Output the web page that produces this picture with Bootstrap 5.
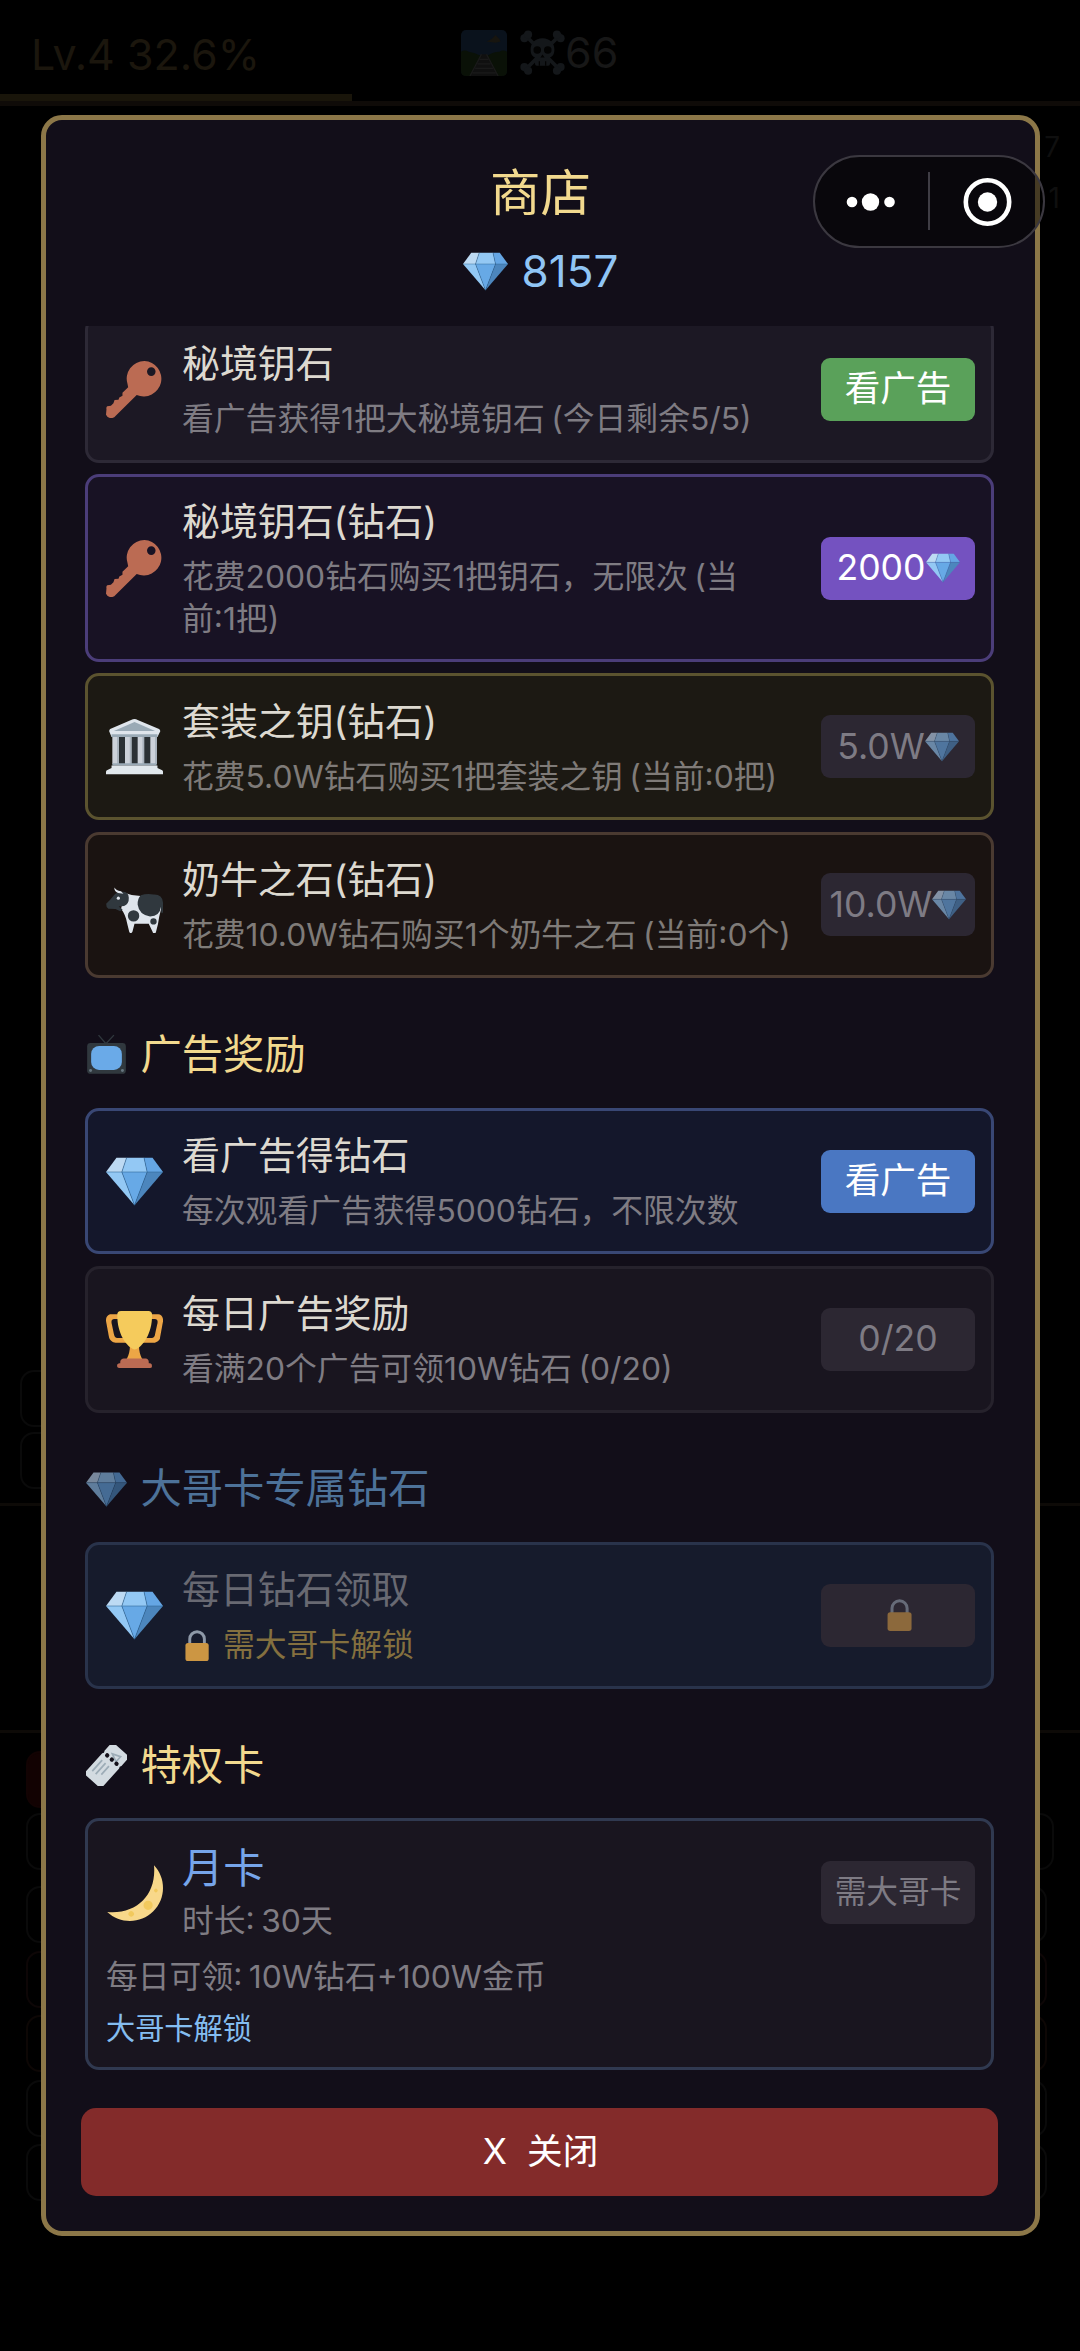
<!DOCTYPE html>
<html lang="zh-CN">
<head>
<meta charset="utf-8">
<meta name="viewport" content="width=device-width, initial-scale=1">
<title>商店</title>
<link href="https://cdn.jsdelivr.net/npm/bootstrap@5.3.0/dist/css/bootstrap.min.css" rel="stylesheet">
<style>
  html, body { height: 2351px; overflow: hidden; }
  body { background: #000; font-family: Inter, "Noto Sans CJK SC", sans-serif; color: #ddd9d0; }
  .stage { width: 1080px; height: 2351px; overflow: hidden; }
  svg { display: block; flex: none; }

  /* dimmed game screen behind the dialog */
  .hud { height: 106px; border-bottom: 5px solid #0f0b08; font-size: 43px; padding: 0 0 0 31px; }
  .hud-level { color: #1b160d; width: 430px; line-height: 109px; }
  .hud-kills { color: #171717; line-height: 109px; padding-top: 4px; }
  .hud-exp { left: 0; top: 94px; width: 352px; height: 7px; background: #19150a; }
  .side-num { right: 20px; font-size: 28px; line-height: 30px; color: #0f0f0f; }
  .ghost { border: 2px solid #0a0a0a; border-radius: 14px; width: 100px; height: 57px; }
  .hline { left: 0; right: 0; height: 3px; background: #0d0a07; }

  /* dialog */
  .shop { width: 999px; height: 2121px; margin: 9px 0 0 41px; border: 5px solid #8c7748; border-radius: 21px; background: #120e19; padding: 0 35px 0 35px; }
  .shop-title { font-size: 50.5px; line-height: 60px; color: #f2d98e; margin-top: 43px; }
  .shop-gems { font-size: 44px; line-height: 60px; color: #90c5f5; gap: 14px; margin-top: 18px; }
  .shop-list { margin-top: 25px; height: 1757px; padding: 0 4px; overflow: hidden; }
  .offer { width: 909px; height: 146.7px; border: 3px solid #2d2936; border-radius: 14px; background: #1c1824; padding: 0 16px 0 18px; margin-bottom: 11.4px; }
  .offer-cut { margin-top: -10px; }
  .offer-purple { height: 188px; background: #181224; border-color: #4b3d79; }
  .offer-gold { background: #1c1913; border-color: #5b532f; }
  .offer-brown { background: #1a1311; border-color: #4a3a31; margin-bottom: 0; }
  .offer-blue { background: #14172b; border-color: #394774; }
  .offer-plain { background: #19151f; border-color: #26222c; margin-bottom: 0; }
  .offer-locked { background: #161b2c; border-color: #29334b; margin-bottom: 0; }
  .offer-month { height: 252px; background: #19151f; border-color: #303950; margin: 0; }
  .offer-text { margin-left: 19px; white-space: nowrap; }
  .offer-name { font-size: 38px; line-height: 52px; margin-top: -1px; letter-spacing: -.1px; }
  .offer-desc { font-size: 31.8px; line-height: 42px; color: #7f7c83; padding-top: 9px; word-spacing: -2.5px; }
  .offer-gold .offer-desc, .offer-brown .offer-desc { color: #7f7b78; }
  .offer-btn { width: 154px; height: 63px; border: 0; border-radius: 9px; padding: 0; font-size: 35.6px; line-height: 60px; color: #fff; background: #2c2732; display: flex; align-items: center; justify-content: center; white-space: nowrap; }
  .offer-btn.off { color: #7e7b84; }
  .offer-btn.off svg { opacity: .6; }
  .btn-green { background: #5aa15a; }
  .btn-violet { background: #7452c0; }
  .btn-azure { background: #4a77c2; }
  .group-head { height: 129.5px; padding: 24px 0 0 1px; font-size: 41.3px; color: #f2d98e; gap: 13.5px; }
  .group-dim { color: #4d7299; }
  .group-dim svg { opacity: .6; }
  .close-btn { height: 88px; width: 917px; border: 0; border-radius: 15px; background: #832b2a; color: #fff; font-size: 35.6px; line-height: 84px; margin-top: 25px; padding: 0 0 0 2px; white-space: pre; }

  /* mini-program capsule */
  .capsule { left: 813px; top: 155px; width: 232px; height: 93px; border: 2px solid #3b3840; border-radius: 47px; background: rgba(0,0,0,.5); }
</style>
</head>
<body>
<svg width="0" height="0" class="position-absolute">
  <symbol id="gem" viewBox="0 0 36 36">
    <path fill="#bddaf3" d="M6.6 3H13l-3 9H0z"/><path fill="#93c8f4" d="M13 3h11l2 9H10z"/><path fill="#65a6e4" d="M24 3h5.4L36 12H26z"/>
    <path fill="#93c8f4" d="M0 12h10l8 21z"/><path fill="#67a9e6" d="M10 12h16l-8 21z"/><path fill="#4c86bd" d="M26 12h10L18 33z"/>
    <path fill="none" stroke="#2c6391" stroke-width=".35" d="M0 12h36M13 3l-3 9 8 21 8-21-2-9"/>
  </symbol>
  <symbol id="key" viewBox="0 0 36 36">
    <path fill="#bb6b53" fill-rule="evenodd" d="M24.3 0A11.2 11.2 0 0 0 13.6 14.6L14 16.5l-3.6 3.6v1.8l-2 1.2-.5 1.3-2.5.3-.7 2-1.6 1.6L.8 28.6Q0 29 .3 30.5L0 34q1 2.4 4 2 1.500-.3 2-1.200L19.400 21.500A11.200 11.200 0 1 0 24.300 0zM28.600 4a2.700 2.700 0 1 1 0 5.400 2.700 2.700 0 0 1 0-5.400z"/>
  </symbol>
  <symbol id="temple" viewBox="0 0 36 36">
    <path fill="#2b3135" d="M5 11h26v19H5z"/>
    <path fill="#ccd2da" d="M4 11h4v18H4zM12 11h4v18h-4zM20 11h4v18h-4zM28 11h4v18h-4z"/>
    <path fill="#aab4be" d="M7 12h1.200v17H7zM15 12h1.200v17H15zM23 12h1.200v17H23zM31 12h1.200v17H31z"/>
    <path fill="#dfe5ec" d="M18 .6Q19 .6 20 1.200L33.500 7q.8.500.8 1.400L32.500 12h-29L2 8.400Q2 7.500 2.600 7L16.200 1.100Q17 .6 18 .6z"/>
    <path fill="#9aaab6" d="M18 2.600L31 8.200H5zM3.500 10.200h29V12h-29zM4 28.500h28v1.500H4z"/>
    <path fill="#e1e8ed" d="M3.500 30h29v1.500l3 1.500q.8.600.5 2.500H0q-.3-2 .6-2.500l2.900-1.500z"/>
  </symbol>
  <symbol id="cow" viewBox="0 0 36 36">
    <g transform="translate(0 5.700)">
    <path fill="#dfe5ec" d="M12 5Q17 7 22 7l10-.5q3 1 3.200 5-.3 4.500-1.600 8.500-.6 5-2 9.500-1 3-2.200 0L27 24.500H18l-1.300 5q-.9 1.700-2 .1L13.300 24Q12.500 19 9.500 15z"/>
    <path fill="#30383e" d="M10 4.300Q14.200 4 14.400 8q.2 4-3 5.200L8 13.500l2.500 2-1.500 1-3-1.300-4.500-.2Q0 14 .1 11.800 2.500 9.800 5 6.500 7 4 10 4.300zM22 6.400q4-1.200 8-.4 5.500-.3 6 5v6q-.5 1.500-1 .5l-.3-3.700Q34 19.500 27.800 19.800 21 19 20 12.500q-.3-3.800 2-6.100z"/>
    <circle cx="17.400" cy="19.500" r="3.600" fill="#30383e"/><circle cx="30" cy="23" r="2" fill="#30383e"/>
    <path fill="#dfe5ec" d="M5.300 1.500q1 1.800 4.200 2.400L11 5.500 7.600 5Q5 4 5.300 1.500z"/><circle cx="7.800" cy="8.300" r="1" fill="#dfe5ec"/>
    </g>
  </symbol>
  <symbol id="tv" viewBox="0 0 36 36">
    <path stroke="#30383e" stroke-width="1.200" fill="none" d="M11 1l6.500 7.500L24.500 1"/>
    <rect x="1" y="8" width="34" height="27" rx="3" fill="#30383e"/><rect x="4.500" y="10.500" width="27" height="21" rx="7" fill="#6aaae8"/>
    <circle cx="4" cy="32" r="1.300" fill="#66757f"/><circle cx="32" cy="32" r="1.300" fill="#66757f"/>
  </symbol>
  <symbol id="cup" viewBox="0 0 36 36">
    <path fill="#eda646" d="M5.123 5h6C12.227 5 13 4.896 13 6V4c0-1.104-.773-2-1.877-2h-8c-2 0-3.583 2.125-3 5 0 0 1.791 9.375 1.917 9.958C2.373 18.500 4.164 20 6.081 20h6.958c1.105 0-.039-1.896-.039-3v-2c0 1.104-.773 2-1.877 2h-4c-1.104 0-1.833-1.042-2-2S3.539 7.667 3.539 7.667C3.206 5.750 4.018 5 5.123 5zm25.812 0h-6C23.831 5 22 4.896 22 6V4c0-1.104 1.831-2 2.935-2h8c2 0 3.584 2.125 3 5 0 0-1.633 9.419-1.771 10-.354 1.500-2.042 3-4 3h-7.146C21.914 20 22 18.104 22 17v-2c0 1.104 1.831 2 2.935 2h4c1.104 0 1.834-1.042 2-2s1.584-7.333 1.584-7.333C32.851 5.750 32.040 5 30.935 5zM20.832 22c0-6.958-2.709 0-2.709 0s-3-6.958-3 0-3.291 10-3.291 10h12.292s-3.292-3.042-3.292-10z"/>
    <path fill="#f5cb5c" d="M29.123 2.500C29.123 15 23 21.500 20.500 23.200q-2.400 2.300-4.700 0C13.200 21.500 7.123 15 7.123 2.500Q7 0 9.500 0h17.200q2.423 0 2.423 2.500z"/>
    <path fill="#bb6b53" d="M27 33.500H9V32c0-1.104 1.164-2 2.206-2h13.917C26.165 30 27 30.896 27 32zM29 34.625c0 .76.165 1.375-1.252 1.375H8.498C7.206 36 7 35.385 7 34.625v-.25C7 33.615 7.738 33 8.498 33h19.250c.759 0 1.252.615 1.252 1.375z"/>
  </symbol>
  <symbol id="lock" viewBox="0 0 36 36">
    <path fill="none" stroke="#8e99a8" stroke-width="3.400" d="M9 18v-7.500a8.500 8.500 0 0 1 17 0V18"/>
    <rect x="4" y="15" width="27" height="21" rx="3" fill="#cc9643"/>
  </symbol>
  <symbol id="ticket" viewBox="0 0 36 36">
    <g transform="rotate(42 18 18)"><path fill="#d3dbe1" d="M10.500-1h15Q28-1 28 1.500v8q-1.500 1.500 0 3V34q0 2.500-2.500 2.500h-15Q8 36.500 8 34V12.500q1.500-1.500 0-3v-8Q8-1 10.500-1z"/>
    <path fill="none" stroke="#9dacb7" stroke-width="1.500" d="M12 17v13M16 17v13M20 17v10M15 7l7-3v6z"/>
    <circle cx="12.500" cy="11" r="1.900" fill="#15111b"/><circle cx="18" cy="11" r="1.900" fill="#15111b"/><circle cx="23.500" cy="11" r="1.900" fill="#15111b"/></g>
  </symbol>
  <symbol id="moon" viewBox="0 0 36 36">
    <path fill="#f8d88a" d="M30.312.776C32 19 20 32 .776 30.312c8.199 7.717 21.091 7.588 29.107-.429C37.900 21.867 38.030 8.975 30.312.776z"/>
    <path fill="#f2c95d" d="M30.705 15.915a1.160 1.160 0 1 0 1.640 1.640 1.160 1.160 0 0 0-1.640-1.640zm-16.022 14.380a1.740 1.740 0 1 0 2.464 2.464 1.740 1.740 0 0 0-2.464-2.464zm13.968-2.147a2.900 2.900 0 1 1-4.108-4.107 2.900 2.900 0 0 1 4.108 4.107z"/>
  </symbol>
  <symbol id="rails" viewBox="0 0 36 36">
    <rect width="36" height="36" rx="4" fill="#0a121c"/><path fill="#17150f" d="M20 9l4-2 3-3 3 3 1 2-4 1z"/>
    <path fill="#0a1107" d="M0 17q3-2 6 0 5 1 9 3h6q4-3 9-3 3-2 6 0v15q0 4-4 4H4q-4 0-4-4z"/>
    <path fill="#101010" d="M16 19h4l9 17H7z"/>
    <path fill="none" stroke="#1a1a1a" stroke-width="1" d="M16 19L7 36M20 19l9 17M14.500 23h7M13 26.500h10M11 30h14M9 33.500h18"/>
  </symbol>
  <symbol id="skull" viewBox="0 0 36 36">
    <g stroke="#14171a" stroke-width="3" stroke-linecap="round"><path d="M4 4l28 28M32 4L4 32"/></g>
    <g fill="#14171a"><circle cx="3.500" cy="6.500" r="3.200"/><circle cx="6.500" cy="3.500" r="3.200"/><circle cx="32.500" cy="6.500" r="3.200"/><circle cx="29.500" cy="3.500" r="3.200"/><circle cx="3.500" cy="29.500" r="3.200"/><circle cx="6.500" cy="32.500" r="3.200"/><circle cx="32.500" cy="29.500" r="3.200"/><circle cx="29.500" cy="32.500" r="3.200"/>
    <path d="M18 6.500c6 0 9.500 4 9.500 9 0 4-1.500 5.500-3.500 6.500v5q0 1.500-1.500 1.500h-9q-1.500 0-1.500-1.500v-5c-2-1-3.500-2.500-3.500-6.500 0-5 3.500-9 9.500-9z"/></g>
    <g fill="#030303"><circle cx="13.800" cy="16" r="3"/><circle cx="22.200" cy="16" r="3"/><path d="M18 19.500l1.700 2.500h-3.400zM15 25h1v3.500h-1zM20 25h1v3.500h-1z"/></g>
  </symbol>
</svg>

<div class="stage position-relative">
  <header class="hud d-flex">
    <div class="hud-level">Lv.4 32.6%</div>
    <div class="hud-kills d-flex align-items-center">
      <svg width="46" height="46"><use href="#rails"/></svg>
      <svg style="margin-left:13px" width="45" height="45"><use href="#skull"/></svg><span>66</span>
    </div>
  </header>
  <div class="hud-exp position-absolute"></div>
  <div class="side-num position-absolute" style="top:132px">7</div>
  <div class="side-num position-absolute" style="top:183px">1</div>
  <div class="hline position-absolute" style="top:1503px"></div>
  <div class="hline position-absolute" style="top:1730px"></div>
  <div class="ghost position-absolute" style="left:20px;top:1370px"></div>
  <div class="ghost position-absolute" style="left:20px;top:1432px"></div>
  <div class="ghost position-absolute" style="left:26px;top:1751px;background:#120202;border-color:#120303"></div>
  <div class="ghost position-absolute" style="left:26px;top:1813px;width:1028px"></div>
  <div class="ghost position-absolute" style="left:26px;top:1886px;width:1021px"></div>
  <div class="ghost position-absolute" style="left:26px;top:1951px;width:1021px;border-color:#0d0606"></div>
  <div class="ghost position-absolute" style="left:26px;top:2015px;width:1021px;border-color:#0d0705"></div>
  <div class="ghost position-absolute" style="left:26px;top:2080px;width:1021px"></div>
  <div class="ghost position-absolute" style="left:26px;top:2144px;width:1021px"></div>

  <main class="shop position-relative d-flex flex-column">
    <h1 class="shop-title text-center fw-normal mb-0">商店</h1>
    <div class="shop-gems d-flex justify-content-center align-items-center">
      <svg width="45" height="45"><use href="#gem"/></svg><span>8157</span>
    </div>

    <div class="shop-list">
      <section class="offer offer-cut d-flex align-items-center">
        <svg width="57" height="57"><use href="#key"/></svg>
        <div class="offer-text flex-grow-1"><div class="offer-name">秘境钥石</div><div class="offer-desc">看广告获得1把大秘境钥石 (今日剩余5/5)</div></div>
        <button class="offer-btn btn-green">看广告</button>
      </section>
      <section class="offer offer-purple d-flex align-items-center">
        <svg width="57" height="57"><use href="#key"/></svg>
        <div class="offer-text flex-grow-1"><div class="offer-name">秘境钥石(钻石)</div><div class="offer-desc">花费2000钻石购买1把钥石，无限次 (当<br>前:1把)</div></div>
        <button class="offer-btn btn-violet">2000<svg width="34" height="34"><use href="#gem"/></svg></button>
      </section>
      <section class="offer offer-gold d-flex align-items-center">
        <svg width="57" height="57"><use href="#temple"/></svg>
        <div class="offer-text flex-grow-1"><div class="offer-name">套装之钥(钻石)</div><div class="offer-desc">花费5.0W钻石购买1把套装之钥 (当前:0把)</div></div>
        <button class="offer-btn off">5.0W<svg width="34" height="34"><use href="#gem"/></svg></button>
      </section>
      <section class="offer offer-brown d-flex align-items-center">
        <svg width="57" height="57"><use href="#cow"/></svg>
        <div class="offer-text flex-grow-1"><div class="offer-name">奶牛之石(钻石)</div><div class="offer-desc">花费10.0W钻石购买1个奶牛之石 (当前:0个)</div></div>
        <button class="offer-btn off">10.0W<svg width="34" height="34"><use href="#gem"/></svg></button>
      </section>

      <h2 class="group-head d-flex align-items-center fw-normal mb-0"><svg width="41" height="41"><use href="#tv"/></svg>广告奖励</h2>
      <section class="offer offer-blue d-flex align-items-center">
        <svg width="57" height="57"><use href="#gem"/></svg>
        <div class="offer-text flex-grow-1"><div class="offer-name">看广告得钻石</div><div class="offer-desc">每次观看广告获得5000钻石，不限次数</div></div>
        <button class="offer-btn btn-azure">看广告</button>
      </section>
      <section class="offer offer-plain d-flex align-items-center">
        <svg width="57" height="57"><use href="#cup"/></svg>
        <div class="offer-text flex-grow-1"><div class="offer-name">每日广告奖励</div><div class="offer-desc">看满20个广告可领10W钻石 (0/20)</div></div>
        <button class="offer-btn off">0/20</button>
      </section>

      <h2 class="group-head group-dim d-flex align-items-center fw-normal mb-0"><svg width="41" height="41"><use href="#gem"/></svg>大哥卡专属钻石</h2>
      <section class="offer offer-locked d-flex align-items-center">
        <svg width="57" height="57"><use href="#gem"/></svg>
        <div class="offer-text flex-grow-1"><div class="offer-name" style="color:#686972">每日钻石领取</div><div class="offer-desc d-flex align-items-center" style="color:#84703f;gap:10px"><svg width="31" height="31"><use href="#lock"/></svg>需大哥卡解锁</div></div>
        <button class="offer-btn off"><svg class="ms-1" width="32" height="32"><use href="#lock"/></svg></button>
      </section>

      <h2 class="group-head d-flex align-items-center fw-normal mb-0"><svg width="41" height="41"><use href="#ticket"/></svg>特权卡</h2>
      <section class="offer offer-month">
        <div class="d-flex align-items-center" style="height:142px">
          <svg width="57" height="57"><use href="#moon"/></svg>
          <div class="offer-text flex-grow-1"><div class="offer-name" style="font-size:41.3px;color:#76a5ea">月卡</div><div class="offer-desc" style="padding-top:6px">时长: 30天</div></div>
          <button class="offer-btn off" style="font-size:31.7px">需大哥卡</button>
        </div>
        <div class="offer-desc p-0" style="margin-top:-7px">每日可领: 10W钻石+100W金币</div>
        <div style="font-size:29.2px;line-height:40px;margin-top:11px;color:#84bdf0">大哥卡解锁</div>
      </section>
    </div>
    <button class="close-btn">X  关闭</button>
  </main>

  <div class="capsule position-absolute">
    <svg width="228" height="89" viewBox="815 157 228 89">
      <g fill="#fff"><circle cx="852" cy="202" r="5.300"/><circle cx="870.500" cy="202" r="8.700"/><circle cx="889.500" cy="202" r="5.300"/><circle cx="987.500" cy="202" r="9.700"/></g>
      <circle cx="987.500" cy="202" r="21.700" fill="none" stroke="#fff" stroke-width="4.600"/>
      <path stroke="#3f3d45" stroke-width="2" d="M929 172v58"/>
    </svg>
  </div>
</div>
<script src="https://cdn.jsdelivr.net/npm/bootstrap@5.3.0/dist/js/bootstrap.bundle.min.js"></script>
</body>
</html>
